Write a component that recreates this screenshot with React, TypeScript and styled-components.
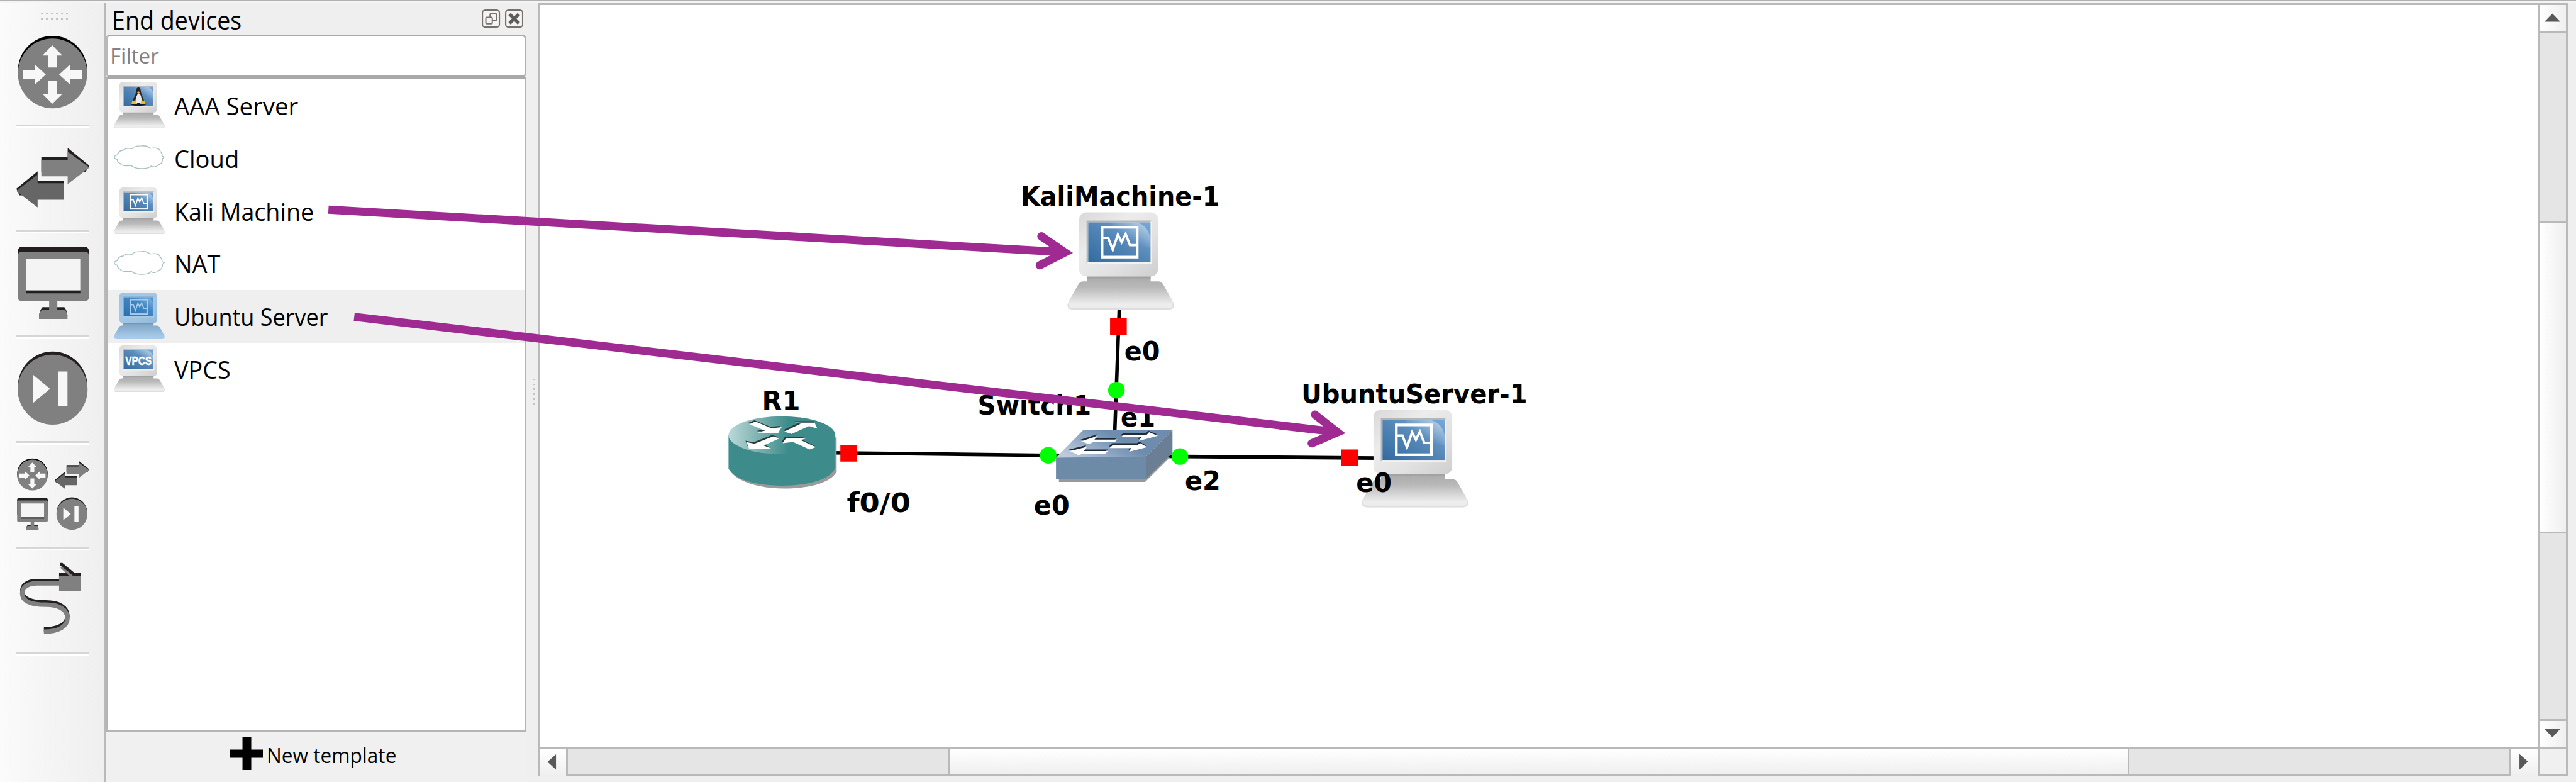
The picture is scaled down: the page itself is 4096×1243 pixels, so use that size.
import React from "react";
import styled, { createGlobalStyle } from "styled-components";

const SCALE = 4096 / 4400;
const u = (n: number) => `${+(n * SCALE).toFixed(3)}px`;

const UI_FONT = `"Open Sans", "Noto Sans", sans-serif`;
const LABEL_FONT = `"DejaVu Sans", sans-serif`;
const PURPLE = "#9f2b92";
const LINE = "#b9b9b9";

const GlobalStyle = createGlobalStyle`
  html, body { margin: 0; padding: 0; background: #efefef; overflow: hidden; }
  *, *::before, *::after { box-sizing: border-box; }
  svg { display: block; }
`;

const Window = styled.div`
  position: relative;
  width: 4096px;
  height: 1243px;
  display: flex;
  flex-direction: column;
  overflow: hidden;
  background: #efefef;
  font-family: ${UI_FONT};
  color: #000;
`;

const TopEdge = styled.div`
  flex: none;
  height: ${u(5.3)};
  background: linear-gradient(#b1b1b1 0 50%, #f4f4f4 50%);
`;

const Main = styled.div`
  flex: 1;
  min-height: 0;
  display: flex;
`;

const Toolbar = styled.nav`
  flex: none;
  width: ${u(177.3)};
  display: flex;
  flex-direction: column;
  align-items: flex-start;
  padding-left: ${u(28)};
  background: linear-gradient(90deg, #fbfbfb, #f5f5f5 45%, #efefef);
`;

const Grip = styled.div`
  height: ${u(33.7)};
  padding: ${u(16.7)} 0 0 ${u(42)};
  display: grid;
  grid-template-columns: repeat(6, ${u(8.55)});
  grid-auto-rows: ${u(8.8)};
  align-content: start;
`;

const Dot = styled.i`
  width: ${u(3)};
  height: ${u(3)};
  background: #c3c3c3;
`;

const Tool = styled.div`
  width: ${u(124)};
  height: ${u(180)};
  border-bottom: 3px solid #fff;
  svg {
    width: ${u(124)};
    height: ${u(174)};
  }
  &::after {
    content: "";
    display: block;
    height: 3px;
    background: #d6d6d6;
  }
`;

const Dock = styled.section`
  flex: none;
  width: ${u(722.2)};
  display: flex;
  flex-direction: column;
  border-left: 3px solid ${LINE};
`;

const DockHeader = styled.header`
  flex: none;
  height: ${u(54)};
  display: flex;
  align-items: center;
  padding: 0 ${u(5.6)} 0 ${u(10.5)};
`;

const DockButtons = styled.div`
  margin-left: auto;
  display: flex;
  gap: ${u(8)};
  svg {
    width: ${u(31.3)};
    height: ${u(31.3)};
  }
`;

const Text = styled.span<{ size: number; stretch: number; shift?: number }>`
  font-size: ${(p) => u(p.size)};
  line-height: 1;
  white-space: pre;
  transform: translateY(${(p) => u(p.shift ?? 0)}) scaleX(${(p) => p.stretch});
  transform-origin: left center;
`;

const FilterBox = styled.div`
  flex: none;
  height: ${u(72.5)};
  display: flex;
  align-items: center;
  padding-left: ${u(4)};
  border: 3px solid #a9a9a9;
  border-left-color: ${LINE};
  border-right-color: #b0b0b0;
  border-radius: ${u(7)};
  background: #fff;
  color: #858085;
`;

const DeviceList = styled.ul`
  flex: none;
  height: ${u(1118.7)};
  margin: 0;
  padding: 0;
  list-style: none;
  border: 3px solid #b4b4b4;
  border-top-color: #a9a9a9;
  background: #fff;
`;

const DeviceRow = styled.li<{ $active?: boolean }>`
  height: ${u(90)};
  display: flex;
  align-items: center;
  padding-left: ${u(10.3)};
  background: ${(p) => (p.$active ? "#efefef" : "#fff")};
`;

const DeviceIcon = styled.span`
  flex: none;
  width: ${u(103.8)};
  svg {
    width: ${u(87)};
    height: ${u(80)};
  }
`;

const NewTemplate = styled.button`
  flex: 1;
  display: flex;
  align-items: flex-start;
  padding: ${u(8.5)} 0 0 ${u(213)};
  border: 0;
  background: #f0f0f0;
  font-family: inherit;
  color: inherit;
  gap: ${u(5.5)};
  svg {
    width: ${u(56)};
    height: ${u(56)};
  }
`;

const Splitter = styled.div`
  flex: none;
  width: ${u(19.2)};
  display: flex;
  flex-direction: column;
  gap: ${u(5.5)};
  padding: ${u(641)} 0 0 ${u(10.8)};
`;

const Workspace = styled.main`
  flex: none;
  width: ${u(3467)};
  height: ${u(1320.7)};
  display: grid;
  grid-template-columns: 1fr ${u(48)};
  grid-template-rows: 1fr ${u(47)};
  border: 3px solid ${LINE};
  background: #fff;
`;

const Scene = styled.div`
  min-width: 0;
  min-height: 0;
  overflow: hidden;
  svg {
    width: ${u(3413)};
    height: ${u(1268)};
  }
`;

const ScrollBar = styled.div<{ $vertical?: boolean }>`
  display: flex;
  min-width: 0;
  min-height: 0;
  flex-direction: ${(p) => (p.$vertical ? "column" : "row")};
  background: #e5e5e5;
  border-left: ${(p) => (p.$vertical ? `3px solid ${LINE}` : "0")};
  border-top: ${(p) => (p.$vertical ? "0" : `3px solid ${LINE}`)};
  --shade: linear-gradient(${(p) => (p.$vertical ? "90deg" : "180deg")}, #fff, #efefef);
`;

const ArrowButton = styled.div`
  flex: none;
  width: ${u(45)};
  height: ${u(45)};
  background: var(--shade);
  svg {
    width: 100%;
    height: 100%;
  }
`;

const Track = styled.div<{ $vertical?: boolean }>`
  flex: 1;
  display: flex;
  flex-direction: ${(p) => (p.$vertical ? "column" : "row")};
  border: 0 solid ${LINE};
  border-width: ${(p) => (p.$vertical ? "3px 0" : "0 3px")};
`;

const Thumb = styled.div<{ $before: number; $size: number; $vertical?: boolean }>`
  border: 0 solid ${LINE};
  background: var(--shade);
  ${(p) =>
    p.$vertical
      ? `height: ${u(p.$size)}; margin-top: ${u(p.$before)}; border-width: 3px 0; width: 100%;`
      : `width: ${u(p.$size)}; margin-left: ${u(p.$before)}; border-width: 0 3px; height: 100%;`}
`;

const Corner = styled.div`
  border: 0 solid ${LINE};
  border-width: 3px 0 0 3px;
  background: #f0f0f0;
`;

const Annotations = styled.svg`
  position: absolute;
  inset: 0;
  width: 4096px;
  height: 1243px;
  pointer-events: none;
`;

/* ---------- toolbar drawings ---------- */

const RouterGlyph = () => (
  <g>
    <ellipse cx="269.5" cy="363" rx="177.5" ry="178" fill="#000" />
    <ellipse cx="269.5" cy="377" rx="177.5" ry="179" fill="#808080" />
    <g fill="#f7f7f7">
      <path d="M246 347V285H218L268 233L320 285H291V347Z" />
      <path d="M246 417V482H218L268 533L320 482H291V417Z" />
      <path d="M117 360H180V332L235 383L180 433V405H117Z" />
      <path d="M421 360H358V332L303 383L358 433V405H421Z" />
    </g>
  </g>
);

const SwitchGlyph = () => (
  <g>
    <path d="M212 802H347V757L458 848L440 880L212 880Z" fill="#231f20" />
    <path d="M212 818H347V776L458 858L347 943V903H212Z" fill="#808080" />
    <path d="M328 925H193V877L84 966L100 1000H328Z" fill="#231f20" />
    <path d="M328 938H193V894L84 978L193 1062V1023H328Z" fill="#666" />
  </g>
);

const MonitorGlyph = () => (
  <g>
    <rect x="92" y="125" width="363" height="200" rx="20" fill="#231f20" />
    <path d="M92 170Q92 152 110 152H437Q455 152 455 170V385Q455 403 437 403H110Q92 403 92 385Z" fill="#808080" />
    <rect x="135" y="187" width="277" height="177" fill="#231f20" />
    <rect x="135" y="187" width="277" height="162" fill="#f4f4f4" />
    <path d="M218 435H330Q346 455 346 480H200Q202 452 218 435Z" fill="#231f20" />
    <path d="M252 403H294V449H334Q346 465 346 480V495H200V480Q202 462 214 449H252Z" fill="#808080" />
  </g>
);

const NextGlyph = () => (
  <g>
    <circle cx="270" cy="839" r="178" fill="#231f20" />
    <circle cx="270" cy="856" r="179" fill="#808080" />
    <path d="M170 780L257 852L170 924Z" fill="#f7f7f7" />
    <rect x="299" y="763" width="47" height="178" fill="#f7f7f7" />
  </g>
);

const CABLE = "M310 756H190C135 756 114 782 114 808C114 850 165 866 235 866C305 866 346 893 346 935C346 980 295 1004 225 1004";

const CableGlyph = () => (
  <g fill="none" stroke="#808080" strokeWidth="23">
    <path d={CABLE} stroke="#231f20" strokeWidth="22" />
    <path d={CABLE} transform="translate(0 12)" />
    <path d="M303 714H413V760H303Z" fill="#231f20" stroke="none" />
    <path d="M303 732H413V808H303Z" fill="#808080" stroke="none" />
    <path d="M310 690L360 735H380L318 680Z" fill="#808080" stroke="none" />
    <path d="M310 664H320L384 716L376 728L308 676Z" fill="#231f20" stroke="none" />
  </g>
);

const AllDevicesGlyph = () => (
  <g>
    <g transform="translate(47.3 45.2) scale(.442)"><RouterGlyph /></g>
    <g transform="translate(241.5 -212) scale(.47 .465)"><SwitchGlyph /></g>
    <g transform="translate(48.2 275) scale(.4325 .44)"><MonitorGlyph /></g>
    <g transform="translate(249.3 33) scale(.4426 .444)"><NextGlyph /></g>
  </g>
);

const TOOLS = [
  { top: 117, glyph: <RouterGlyph /> },
  { top: 657, glyph: <SwitchGlyph /> },
  { top: 57, glyph: <MonitorGlyph /> },
  { top: 597, glyph: <NextGlyph /> },
  { top: 57, glyph: <AllDevicesGlyph /> },
  { top: 597, glyph: <CableGlyph /> },
];

/* ---------- device drawings ---------- */

type Face = "wave" | "tux" | "vpcs";

const Defs = ({ id, tint }: { id: string; tint?: boolean }) => (
  <defs>
    <linearGradient id={`${id}-case`} x1="0" y1="0" x2="1" y2="1">
      <stop offset="0" stopColor={tint ? "#9cc3e3" : "#d8d8d8"} />
      <stop offset=".35" stopColor={tint ? "#a4c8e6" : "#ececec"} />
      <stop offset=".65" stopColor={tint ? "#9fc4e2" : "#e2e2e2"} />
      <stop offset="1" stopColor={tint ? "#8fb8da" : "#cecece"} />
    </linearGradient>
    <linearGradient id={`${id}-base`} x1="0" y1="0" x2="0" y2="1">
      <stop offset="0" stopColor={tint ? "#7fa3c2" : "#a9a9a9"} />
      <stop offset=".35" stopColor={tint ? "#8db2d2" : "#b9b9b9"} />
      <stop offset=".85" stopColor={tint ? "#a6cbea" : "#eeeeee"} />
      <stop offset="1" stopColor={tint ? "#a8cdec" : "#e9e9e9"} />
    </linearGradient>
    <linearGradient id={`${id}-screen`} x1="0" y1="1" x2="1" y2="0">
      <stop offset="0" stopColor={tint ? "#2a6fae" : "#336a9f"} />
      <stop offset=".5" stopColor={tint ? "#3d83c0" : "#5386b6"} />
      <stop offset="1" stopColor={tint ? "#5799d2" : "#78a8d6"} />
    </linearGradient>
    <linearGradient id={`${id}-gloss`} x1="0" y1="1" x2="1" y2="0">
      <stop offset=".4" stopColor="#fff" stopOpacity="0" />
      <stop offset="1" stopColor="#fff" stopOpacity={tint ? ".3" : ".55"} />
    </linearGradient>
  </defs>
);

const Computer = ({ id, face, tint }: { id: string; face: Face; tint?: boolean }) => (
  <g>
    <Defs id={id} tint={tint} />
    <path d="M33 108H142V118H155Q161 118 164 124L181 154Q184 166 172 166H10Q-2 166 1 154L18 124Q21 118 27 118H33Z" fill={`url(#${id}-base)`} />
    {!tint && <path d="M2 156Q-1 165 10 165H172Q183 165 180 156" fill="none" stroke="#dedede" strokeWidth="2.5" />}
    <path d="M33 109H142V113H33Z" fill={tint ? "#7396b5" : "#a3a3a3"} />
    <rect x="20" y="0" width="134.5" height="109.5" rx="12" fill={`url(#${id}-case)`} />
    <path d="M34 87V15.5H143" fill="none" stroke={tint ? "#7fa9cd" : "#a9a9a9"} strokeWidth="3" opacity=".8" />
    <path d="M143 16V87H34" fill="none" stroke={tint ? "#a9cdea" : "#f2f2f2"} strokeWidth="3" />
    <rect x="35.5" y="17.2" width="106.3" height="68.1" fill={`url(#${id}-screen)`} />
    <path d="M75 17.2H118Q138 22 141.8 46V60L80 60Z" fill={`url(#${id}-gloss)`} />
    {face === "wave" && (
      <g fill="none" stroke={tint ? "#a6cdee" : "#fff"} strokeWidth="4.6">
        <rect x="59" y="25.5" width="60" height="51" />
        <path d="M61 43.7H69.5L77.3 64L86 38L92.5 51L99.3 37L106.7 56H117" strokeWidth="4" />
      </g>
    )}
    {face === "tux" && (
      <g>
        <ellipse cx="88" cy="80" rx="27" ry="5.5" fill="#0d1a28" />
        <path d="M88 20C80 20 80 30 79 38C77 50 66 62 68 76H108C110 62 99 50 97 38C96 30 96 20 88 20Z" fill="#26231f" />
        <path d="M86 42C79 54 76 64 78 76H98C101 62 98 52 93 42Z" fill="#ececec" />
        <path d="M82 37L88 34L94 37L88 44Z" fill="#f1b62a" />
        <path d="M66 68L77 66L85 80L63 79Z" fill="#f2bd1d" />
        <path d="M110 68L99 66L93 80L113 79Z" fill="#f2bd1d" />
      </g>
    )}
    {face === "vpcs" && (
      <text x="41" y="69" fill="#fff" stroke="#fff" strokeWidth="1" fontFamily="'Liberation Sans', sans-serif" fontWeight="700" fontSize="40" textLength="94" lengthAdjust="spacingAndGlyphs">
        VPCS
      </text>
    )}
  </g>
);

const Cloud = () => (
  <path
    transform="translate(-1 -18)"
    d="M14 90C16 80 24 74 34 74C40 66 52 66 66 68C70 60 88 58 100 58C116 57 124 60 130 67C144 64 164 64 167 78C175 84 174 90 173 94L181 98L174 104C176 114 172 122 160 126C152 135 140 134 134 130C122 141 88 142 72 134L62 128C46 130 28 130 24 121C16 117 13 111 14 107C-1 102 -1 94 14 90Z"
    fill="#fff"
    stroke="#a9bfc1"
    strokeWidth="3.2"
  />
);

const RouterNode = () => (
  <g transform="translate(1220 620) scale(.33333)">
    <defs>
      <linearGradient id="router-top" x1="0" y1="0" x2="1" y2="0">
        <stop offset="0" stopColor="#bcd8d8" />
        <stop offset=".56" stopColor="#3d8c8b" />
      </linearGradient>
    </defs>
    <path d="M83 380H629V555C600 615 480 642 360 642C240 642 120 610 83 550Z" fill="#9a9a9a" />
    <path d="M75 367H622V535C600 600 470 627 348 627C226 627 110 600 75 540Z" fill="#3d8c8b" />
    <ellipse cx="348.5" cy="369" rx="273.5" ry="97" fill="url(#router-top)" />
    {["#2b3a3a", "#fff"].map((fill, i) => (
      <g key={fill} fill={fill} transform={i ? undefined : "translate(-5 -7)"}>
        <path d="M182 312L213 299L295 333L347 328L328 360L222 355L262 345Z" />
        <path d="M360 350L445 310L415 304L516 304L530 335L488 322L398 362Z" />
        <path d="M303 375L337 385L255 421L294 438L180 437L167 404L208 412Z" />
        <path d="M522 430L490 442L405 403L352 410L370 383L478 383L445 394Z" />
      </g>
    ))}
  </g>
);

const SwitchNode = () => (
  <g transform="translate(1620 620) scale(.33333)">
    <defs>
      <linearGradient id="switch-top" x1="0" y1=".7" x2="1" y2=".3">
        <stop offset="0" stopColor="#bccbdc" />
        <stop offset=".6" stopColor="#6d8cae" />
      </linearGradient>
    </defs>
    <path d="M568 590V608H1010L1135 484V465Z" fill="#999" />
    <path d="M1150 342V460L1015 593V478Z" fill="#6b7f94" />
    <path d="M553 480L1015 476V593H553Z" fill="#6d8ba9" />
    <path d="M693 342H1150L1015 478L553 484Z" fill="url(#switch-top)" />
    {["#1f2b38", "#fff"].map((fill, i) => (
      <g key={fill} fill={fill} transform={i ? undefined : "translate(-4 -8)"}>
        <path d="M682 400L768 372L750 391H868L852 405H742L722 415Z" />
        <path d="M886 378L902 366H1018L1030 353L1075 372L978 398L990 378Z" />
        <path d="M828 435L845 418H972L985 410L1020 430L928 453L938 435Z" />
        <path d="M624 450L712 428L695 450H822L802 465H685L668 471Z" />
      </g>
    ))}
  </g>
);

const LABELS: [string, number, number, number][] = [
  ["KaliMachine-1", 1744, 351, 340],
  ["R1", 1302, 700, 65.5],
  ["f0/0", 1447, 874, 109],
  ["Switch1", 1670.5, 707.7, 194],
  ["e1", 1915, 727.7, 59],
  ["e2", 2024.5, 837, 61],
  ["e0", 1766.5, 879, 61],
  ["e0", 1921, 615, 61],
  ["UbuntuServer-1", 2223.5, 688.7, 386],
  ["e0", 2317, 840, 61],
];

const Topology = () => (
  <svg viewBox="922.3 8.4 3413 1268">
    <g stroke="#000" strokeWidth="6">
      <path d="M1424 773L1812 777.6M1990 779L2352 782M1912.5 525L1904.7 738" fill="none" />
    </g>
    <RouterNode />
    <SwitchNode />
    <path d="M1995 780L2004 776V782Z" fill="#000" />
    <g transform="translate(1824 362.3)"><Computer id="kali-node" face="wave" /></g>
    <g transform="translate(2326.6 699.8)"><Computer id="ubuntu-node" face="wave" /></g>
    <g fill="#f00">
      <rect x="1896.7" y="543.3" width="28.5" height="28.7" />
      <rect x="1436" y="759.3" width="28.3" height="28.7" />
      <rect x="2291.3" y="767.3" width="28.7" height="28.5" />
    </g>
    <g fill="#0f0">
      <circle cx="1907.5" cy="666" r="14.2" />
      <circle cx="1791" cy="777.3" r="14.2" />
      <circle cx="2016" cy="779.3" r="14.2" />
    </g>
    <g fontFamily={LABEL_FONT} fontWeight="700" fontSize="45" fill="#000">
      {LABELS.map(([text, x, y, w]) => (
        <text key={`${text}-${x}`} x={x} y={y} textLength={w} lengthAdjust="spacingAndGlyphs">
          {text}
        </text>
      ))}
    </g>
  </svg>
);

const DEVICES: { name: string; stretch: number; icon: React.ReactNode; active?: boolean }[] = [
  { name: "AAA Server", stretch: 0.98, icon: <Computer id="aaa" face="tux" /> },
  { name: "Cloud", stretch: 0.975, icon: <Cloud /> },
  { name: "Kali Machine", stretch: 0.962, icon: <Computer id="kali" face="wave" /> },
  { name: "NAT", stretch: 0.97, icon: <Cloud /> },
  { name: "Ubuntu Server", stretch: 0.922, icon: <Computer id="ubuntu" face="wave" tint />, active: true },
  { name: "VPCS", stretch: 0.965, icon: <Computer id="vpcs" face="vpcs" /> },
];

const Triangle = ({ d }: { d: string }) => (
  <ArrowButton>
    <svg viewBox="0 0 45 45"><path d={d} fill="#595959" /></svg>
  </ArrowButton>
);

export default function App() {
  return (
    <>
      <GlobalStyle />
      <Window>
        <TopEdge />
        <Main>
          <Toolbar>
            <Grip>
              {Array.from({ length: 12 }, (_, i) => <Dot key={i} />)}
            </Grip>
            {TOOLS.map((tool, i) => (
              <Tool key={i}>
                <svg viewBox={`84 ${tool.top} 372 522`}>{tool.glyph}</svg>
              </Tool>
            ))}
          </Toolbar>

          <Dock>
            <DockHeader>
              <Text size={43} stretch={0.94} shift={2}>End devices</Text>
              <DockButtons>
                <svg viewBox="0 0 94 94" fill="#f4f4f4" stroke="#77706b">
                  <rect x="3.5" y="3.5" width="87" height="87" rx="14" strokeWidth="7" />
                  <rect x="43" y="21" width="32" height="36" rx="5" strokeWidth="6.5" />
                  <rect x="21" y="40" width="33" height="33" rx="5" strokeWidth="6.5" />
                </svg>
                <svg viewBox="0 0 94 94" fill="#f4f4f4" stroke="#77706b">
                  <rect x="3.5" y="3.5" width="87" height="87" rx="14" strokeWidth="7" />
                  <path d="M23 24L71 71M71 24L23 71" stroke="#5f5d5a" strokeWidth="17" />
                </svg>
              </DockButtons>
            </DockHeader>
            <FilterBox>
              <Text size={34.5} stretch={1.03}>Filter</Text>
            </FilterBox>
            <DeviceList>
              {DEVICES.map((device) => (
                <DeviceRow key={device.name} $active={device.active}>
                  <DeviceIcon>
                    <svg viewBox="0 0 182 167">{device.icon}</svg>
                  </DeviceIcon>
                  <Text size={42} stretch={device.stretch} shift={0}>{device.name}</Text>
                </DeviceRow>
              ))}
            </DeviceList>
            <NewTemplate>
              <svg viewBox="0 0 56 56"><path d="M21 0H36V56H21ZM0 21H56V35H0Z" fill="#000" /></svg>
              <Text size={35} stretch={0.97} shift={14.5}>New template</Text>
            </NewTemplate>
          </Dock>

          <Splitter>
            {Array.from({ length: 6 }, (_, i) => <Dot key={i} />)}
          </Splitter>

          <Workspace>
            <Scene><Topology /></Scene>
            <ScrollBar $vertical>
              <Triangle d="M8.5 28.5L22 14.5L35.5 28.5Z" />
              <Track $vertical><Thumb $vertical $before={320.5} $size={533.5} /></Track>
              <Triangle d="M8.5 13.5L22 28L35.5 13.5Z" />
            </ScrollBar>
            <ScrollBar>
              <Triangle d="M28 8.5L13.5 21.5L28 35Z" />
              <Track><Thumb $before={648.5} $size={2019} /></Track>
              <Triangle d="M14 8L28.5 21L14 35Z" />
            </ScrollBar>
            <Corner />
          </Workspace>
        </Main>

        <Annotations viewBox="0 0 4400 1335.25" preserveAspectRatio="none" fill="none" stroke={PURPLE} strokeWidth="14">
          <path d="M561 358L1817 430.6M605 541L2282 737.6" />
          <path d="M1778.7 403.5L1819 430.9L1776 453M2246 708L2284.5 738L2240.5 757" strokeLinecap="round" strokeMiterlimit="8" />
        </Annotations>
      </Window>
    </>
  );
}
